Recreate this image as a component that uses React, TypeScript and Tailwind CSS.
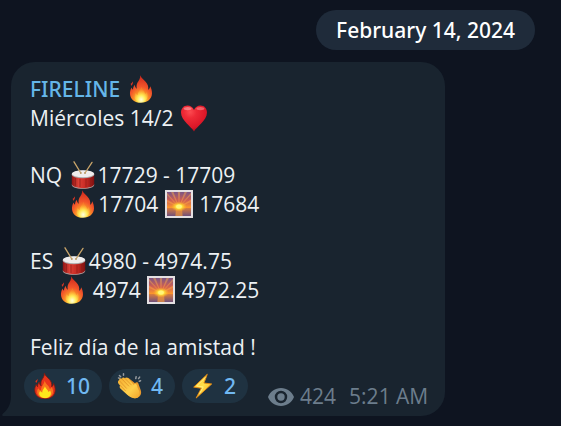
import type { ReactNode } from "react";

function Gradients() {
  return (
    <svg className="absolute h-0 w-0" aria-hidden="true">
      <defs>
        <radialGradient id="flame" cx="0.5" cy="0.95" r="0.9">
          <stop offset="0" stopColor="#fff7a0" />
          <stop offset="0.2" stopColor="#ffd23e" />
          <stop offset="0.38" stopColor="#fb8f28" />
          <stop offset="0.6" stopColor="#f2552a" />
          <stop offset="1" stopColor="#cf2a1e" />
        </radialGradient>
        <radialGradient id="flameCore" cx="0.5" cy="0.85" r="0.65">
          <stop offset="0" stopColor="#ffffe0" />
          <stop offset="0.45" stopColor="#ffec58" />
          <stop offset="1" stopColor="#ffb030" stopOpacity="0.2" />
        </radialGradient>
        <radialGradient id="heart" cx="0.35" cy="0.25" r="0.8">
          <stop offset="0" stopColor="#fb4a50" />
          <stop offset="0.3" stopColor="#ee2a36" />
          <stop offset="0.75" stopColor="#dc1728" />
          <stop offset="1" stopColor="#a80d1c" />
        </radialGradient>
        <linearGradient id="drum" x1="0" x2="1" y1="0" y2="0">
          <stop offset="0" stopColor="#8f1414" />
          <stop offset="0.3" stopColor="#dc4036" />
          <stop offset="0.65" stopColor="#c42822" />
          <stop offset="1" stopColor="#7c1010" />
        </linearGradient>
        <linearGradient id="sky" x1="0" x2="0" y1="0" y2="1">
          <stop offset="0" stopColor="#7a5585" />
          <stop offset="0.35" stopColor="#cf5f52" />
          <stop offset="0.65" stopColor="#fb962c" />
        </linearGradient>
        <linearGradient id="sea" x1="0" x2="0" y1="0" y2="1">
          <stop offset="0" stopColor="#dc7d3c" />
          <stop offset="1" stopColor="#70507a" />
        </linearGradient>
        <radialGradient id="sun">
          <stop offset="0" stopColor="#fffcb0" />
          <stop offset="0.4" stopColor="#ffe33c" />
          <stop offset="1" stopColor="#ffb020" stopOpacity="0" />
        </radialGradient>
        <linearGradient id="hand" x1="0" x2="1" y1="0" y2="1">
          <stop offset="0" stopColor="#f5ae30" />
          <stop offset="0.6" stopColor="#ffd04c" />
          <stop offset="1" stopColor="#f3a42a" />
        </linearGradient>
        <linearGradient id="bolt" x1="0" x2="1" y1="0" y2="1">
          <stop offset="0" stopColor="#ffc72e" />
          <stop offset="0.5" stopColor="#ffe04a" />
          <stop offset="1" stopColor="#f59a16" />
        </linearGradient>
      </defs>
    </svg>
  );
}

function Glyph({ label, children }: { label: string; children: ReactNode }) {
  return (
    <svg role="img" aria-label={label} viewBox="0 0 28 28" className="inline-block h-7 w-[30px] align-[-6px]">
      {children}
    </svg>
  );
}

const FLAME =
  "M13.2 0.2C13.6 3.6 11.6 5.4 10.4 7.8C9.4 9.8 9.4 11.6 9.8 13.8C8.6 12.8 7.9 11.4 7.8 9.8C6.4 11.4 6 13 6 14.8C5.2 14 4.8 13.2 4.6 12.4C3.4 14.6 2.8 16.6 3 19.2C3.4 24.4 7.8 27.8 14 27.8C20.4 27.8 24.8 24 25 18.6C25.1 15.6 24.2 13.2 23.2 11.2C23 12.8 22.4 14 21.2 14.8C21.6 11.6 20.8 9.2 18.8 7C16.6 4.6 14.4 3 13.2 0.2Z";

function Fire() {
  return (
    <Glyph label="Fire">
      <path d={FLAME} fill="url(#flame)" />
      <path d="M3.8 8.6C5 8 5.4 7.2 5.8 6.2C6.4 8 5.4 9.4 4.6 10.8C3.9 10.2 3.7 9.4 3.8 8.6Z" fill="#d43424" />
      <path
        d="M14.4 11.6C15 14.8 17.8 16.4 18.2 19C19 18.4 19.4 17.6 19.6 16.8C20.8 18.8 21.4 21 20.2 23.4C19 25.8 17 27 13.8 27C10.2 27 7.6 24.8 7.6 21.4C7.6 20 8 18.8 8.6 17.8C9 19 9.8 19.8 10.8 20C10.4 16.6 14.4 14.6 14.4 11.6Z"
        fill="url(#flameCore)"
      />
    </Glyph>
  );
}

function Heart() {
  return (
    <Glyph label="Heart">
      <path
        d="M14 27.4C11.6 23.2 1 16.4 1 8.6C1 4.4 3.8 1.6 7.4 1.6C10.4 1.6 12.8 3.2 14 6C15.2 3.2 17.6 1.6 20.6 1.6C24.2 1.6 27 4.4 27 8.6C27 16.4 16.4 23.2 14 27.4Z"
        fill="url(#heart)"
      />
      <ellipse cx="7.6" cy="4.6" rx="4" ry="1.6" fill="#ffb4b4" opacity="0.55" />
      <ellipse cx="20.4" cy="4.6" rx="4" ry="1.6" fill="#ffa0a0" opacity="0.5" />
    </Glyph>
  );
}

function Drum() {
  return (
    <Glyph label="Drum">
      <path d="M2.8 13.4V23.4C2.8 25.8 7.8 27.6 14 27.6S25.2 25.8 25.2 23.4V13.4Z" fill="url(#drum)" />
      <path d="M2.8 23.2C3.4 25.4 8 26.9 14 26.9S24.6 25.4 25.2 23.2V24C25.2 26.2 20 27.8 14 27.8S2.8 26.2 2.8 24Z" fill="#a8a0a0" />
      <path d="M6.4 16.8V24.8M11 17.8V26M17 17.8V26M21.6 16.8V24.8" stroke="#8a1c18" strokeWidth="0.7" />
      <ellipse cx="14" cy="13.4" rx="11.4" ry="3.9" fill="#a9a7a8" />
      <ellipse cx="14" cy="12.7" rx="11.2" ry="3.5" fill="#efeded" />
      <path d="M5 0.8L11.8 12M23 1.4L16 12" stroke="#c9a56a" strokeWidth="1.3" strokeLinecap="round" />
      <circle cx="11.8" cy="12" r="0.9" fill="#b99a68" />
      <circle cx="16" cy="12" r="0.9" fill="#b99a68" />
    </Glyph>
  );
}

function Sunrise() {
  return (
    <Glyph label="Sunrise">
      <rect x="0" y="0" width="28" height="28" fill="#e4e0e2" />
      <rect x="2" y="2" width="24" height="24" fill="url(#sky)" />
      <path
        d="M14 17L2 12V9.5ZM14 17L2 5V2.8ZM14 17L6 2H8.5ZM14 17L12.8 2H15.2ZM14 17L19.5 2H22ZM14 17L26 2.8V5ZM14 17L26 9.5V12Z"
        fill="#ffac47"
        opacity="0.45"
      />
      <rect x="2" y="18" width="24" height="8" fill="url(#sea)" />
      <path d="M11 18H17L17.6 26H10.4Z" fill="#f0963a" opacity="0.7" />
      <ellipse cx="14" cy="16.6" rx="8" ry="5" fill="url(#sun)" />
      <ellipse cx="14" cy="16.4" rx="2.8" ry="2" fill="#fff67a" />
    </Glyph>
  );
}

function ReactionFire() {
  return (
    <svg viewBox="0 0 28 28" className="h-[26px] w-[26px]" aria-hidden="true">
      <path d={FLAME} fill="#e8341c" stroke="#7c1a12" strokeWidth="0.9" />
      <path d="M3.8 8.6C5 8 5.4 7.2 5.8 6.2C6.4 8 5.4 9.4 4.6 10.8C3.9 10.2 3.7 9.4 3.8 8.6Z" fill="#e8341c" />
      <path d="M13.6 8C14.6 12 18.6 13.6 19.2 17.2C20.4 16.6 21 15.6 21.2 15C22.8 17.4 23.2 20.2 22 23C20.4 26 17.6 27.2 14 27.2C9.4 27.2 5.8 24.6 5.6 20.8C5.4 19 6 17.4 6.8 16.4C7.4 17.6 8.4 18.4 9.8 18.8C9.4 14.4 13.4 12 13.6 8Z" fill="#f9751e" />
      <path d="M13.8 14.4C14.6 17 17.4 18.2 17.8 20.4C18.6 20 19 19.4 19.4 18.8C20.6 20.6 20.8 22.6 19.6 24.4C18.4 26.2 16.4 27 14 27C10.6 27 7.8 25.2 7.8 22.2C7.8 20.8 8.2 20 8.8 19.4C9.4 20.4 10.2 20.8 11.2 21C10.8 18.2 13.6 17 13.8 14.4Z" fill="#ffe81c" />
    </svg>
  );
}

function ReactionClap() {
  return (
    <svg viewBox="0 0 28 28" className="h-[26px] w-[26px]" aria-hidden="true">
      <path d="M2.6 2.6L4 4M7 0.8V2.4M1.6 5.4L2.6 5.6M20.6 4L20.2 6M24.4 4.4L23.2 6M25.4 8.4L24 8.8" stroke="#979b9f" strokeWidth="1.6" strokeLinecap="round" />
      <path
        d="M10 5.6C11 4.6 12.4 5 13.4 6.2L19.4 11C20.6 9.4 22.6 9.8 23 11.4L25.6 18.6C27 22.6 24.6 26.4 21 27C17 27.6 14 25.6 11 22.8L8 12Z"
        fill="#e8992c"
      />
      <path
        d="M2.4 7.6C2 5.8 4 4.8 5.4 6.2C5.6 4.6 7.4 4.4 8.6 5.6C9.4 4.4 11 4.8 12 6L18.2 13C18.6 11.4 20.2 11 21 12.4C21.8 14 22 15.6 23 17.4C25.4 21.6 24.6 25.4 21.2 26.8C17 28 13.6 26 10.4 23L3.6 16.6C2.4 15.4 2.6 14.2 3.6 13.8L1.8 11.8C0.6 10.4 0.8 8.4 2.4 7.6Z"
        fill="url(#hand)"
      />
      <path d="M5.4 6.6L12.6 14M8.8 6L15.4 12.8M2.8 8.6L10.2 16.4M3.8 13.8L9 19" stroke="#dd8f26" strokeWidth="0.8" strokeLinecap="round" />
    </svg>
  );
}

function ReactionBolt() {
  return (
    <svg viewBox="0 0 28 28" className="h-[26px] w-[26px]" aria-hidden="true">
      <path d="M18.6 1.4L4 15.2L12.2 16.4L6.6 27L23.4 11.8L15 10.8Z" fill="url(#bolt)" stroke="#e68a12" strokeWidth="1" strokeLinejoin="round" />
      <path d="M16.6 4.6L7.2 14L14.2 15L10.4 22" fill="none" stroke="#fff08a" strokeWidth="0.9" />
    </svg>
  );
}

const reactions = [
  { name: "Fire", count: 10, icon: <ReactionFire /> },
  { name: "Clap", count: 4, icon: <ReactionClap /> },
  { name: "Lightning", count: 2, icon: <ReactionBolt /> },
];

export default function App() {
  return (
    <main className="flex min-h-screen flex-col bg-[#0e1420] pt-[10px] font-['Open_Sans','Noto_Sans',sans-serif] text-[21px] leading-[29px] text-[#edf1f4]">
      <Gradients />
      <div className="flex justify-end pr-[26px]">
        <time dateTime="2024-02-14" className="flex h-10 items-center rounded-full bg-[#1f2b3a] px-5 font-['Noto_Sans','Open_Sans',sans-serif] font-medium text-white">
          February 14, 2024
        </time>
      </div>

      <article className="relative mt-3 ml-[11px] w-fit rounded-3xl rounded-bl-none bg-[#19242f] pt-[13px] pr-[17px] pb-[5px] pl-[13px]">
        <svg viewBox="0 0 10 20" className="absolute bottom-0 -left-[9px] h-5 w-[10px]" aria-hidden="true">
          <path d="M9 0C9 8 6 13.5 1 17.5C-0.4 18.8 0.2 20 1.6 20H10V0Z" fill="#19242f" />
        </svg>

        <div className="flex flex-col gap-7 pl-[6px] whitespace-pre">
          <p>
            <a href="#fireline" className="font-['Noto_Sans','Open_Sans',sans-serif] font-medium text-[#65b6e8]">FIRELINE</a> <Fire />
            <br />
            {"Miércoles 14/2 "}<Heart />
          </p>
          <p>
            {"NQ "}<Drum />{"17729 - 17709"}
            <br />
            {"       "}<Fire />{"17704 "}<Sunrise />{" 17684"}
          </p>
          <p>
            {"ES "}<Drum />{"4980 - 4974.75"}
            <br />
            {"     "}<Fire />{" 4974 "}<Sunrise />{" 4972.25"}
          </p>
          <p>Feliz día de la amistad !</p>
        </div>

        <footer className="mt-[7px] flex items-end gap-5">
          <div className="mb-2 flex gap-[7px]">
            {reactions.map((r) => (
              <button
                key={r.name}
                type="button"
                aria-label={`${r.name} ${r.count}`}
                className="flex h-[34px] items-center gap-2 rounded-full bg-[#1f3241] pr-3 pl-2 font-['Noto_Sans','Open_Sans',sans-serif] font-medium text-[#70b8f2]"
              >
                {r.icon}
                <span>{r.count}</span>
              </button>
            ))}
          </div>
          <div className="flex items-center text-[#6c7d8c]">
            <svg viewBox="0 0 26 18" className="mr-[6px] h-[18px] w-[26px]" role="img" aria-label="Views">
              <path
                fill="currentColor"
                fillRule="evenodd"
                d="M13 0C7 0 2.2 3.6 0 9C2.2 14.4 7 18 13 18S23.8 14.4 26 9C23.8 3.6 19 0 13 0ZM13 15.2A6.2 6.2 0 1 1 13 2.8A6.2 6.2 0 0 1 13 15.2ZM13 5.3A3.7 3.7 0 1 0 13 12.7A3.7 3.7 0 0 0 13 5.3Z"
              />
            </svg>
            <span className="mr-[13px]">424</span>
            <time dateTime="05:21">5:21 AM</time>
          </div>
        </footer>
      </article>
    </main>
  );
}
